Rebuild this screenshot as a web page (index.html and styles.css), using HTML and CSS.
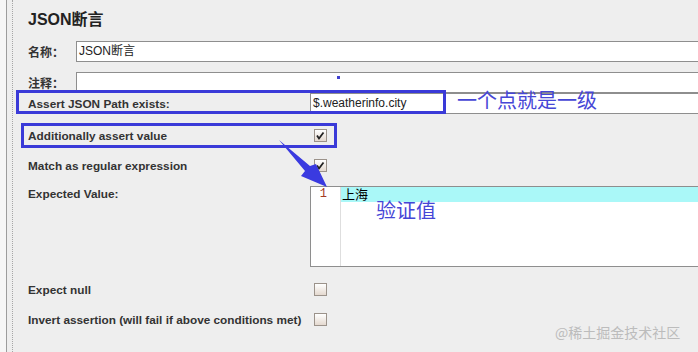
FILE: index.html
```html
<!DOCTYPE HTML>
<html>
    <head>
        <meta charset='utf-8'/>
        <link rel="stylesheet" href="styles.css">
    </head>
    <body>
        <div class="page">
            <div class="rail"></div>
            <div class="rail-dots"></div>
            <div class="main">
                <h1 class="title">JSON断言</h1>
                <div class="row short name">
                    <span class="lbl">名称：</span>
                    <div class="field">JSON断言</div>
                </div>
                <div class="row short comment">
                    <span class="lbl">注释：</span>
                    <div class="field"></div>
                </div>
                <div class="row wide path">
                    <span class="lbl">Assert JSON Path exists:</span>
                    <div class="field">$.weatherinfo.city</div>
                </div>
                <div class="row wide check c1">
                    <span class="lbl">Additionally assert value</span>
                    <span class="box"><svg width="11" height="11" viewBox="0 0 11 11"><path d="M2 5.5 L4 8.5 L8.5 2.5" fill="none" stroke="#222" stroke-width="1.8"/></svg></span>
                </div>
                <div class="row wide check c2">
                    <span class="lbl">Match as regular expression</span>
                    <span class="box"><svg width="11" height="11" viewBox="0 0 11 11"><path d="M2 5.5 L4 8.5 L8.5 2.5" fill="none" stroke="#222" stroke-width="1.8"/></svg></span>
                </div>
                <div class="row wide value">
                    <span class="lbl">Expected Value:</span>
                    <div class="editor">
                        <div class="gutter">1</div>
                        <div class="code">
                            <div class="line cur">上海</div>
                        </div>
                    </div>
                </div>
                <div class="row wide check c3">
                    <span class="lbl">Expect null</span>
                    <span class="box"></span>
                </div>
                <div class="row wide check c4">
                    <span class="lbl">Invert assertion (will fail if above conditions met)</span>
                    <span class="box"></span>
                </div>
            </div>

            <!-- annotations drawn over the screenshot -->
            <div class="mark mark1"></div>
            <div class="mark mark2"></div>
            <div class="dot"></div>
            <div class="note note1">一个点就是一级</div>
            <div class="note note2">验证值</div>
            <svg class="arrow" width="698" height="352" viewBox="0 0 698 352">
                <path d="M279 140 L310 166 L316 164 L327 187 L301 176 L305 171 Z" fill="#3a3ae0"/>
            </svg>
            <div class="watermark">@稀土掘金技术社区</div>
        </div>
    </body>
</html>
```

FILE: styles.css
```css
body{
    margin: 0;
    background: #eeeeee;
    font-family: "Liberation Sans", "Noto Sans CJK SC", sans-serif;
    font-size: 12px;
    color: #333;
    overflow: hidden;
}
.page{
    position: relative;
    display: flex;
    height: 352px;
}
.rail{
    width: 6px;
    background: #f6f6f6;
    border-right: 1px solid #9c9c9c;
}
.rail-dots{
    width: 5px;
    border-right: 1px dotted #a6a6a6;
}
.main{
    flex: 1;
    padding-left: 15px;
    display: flex;
    flex-direction: column;
}
.title{
    margin: 10px 0 0;
    height: 20px;
    line-height: 20px;
    font-size: 16px;
    font-weight: bold;
    color: #222;
}
.row{
    display: flex;
    align-items: center;
}
.lbl{
    font-weight: bold;
    white-space: nowrap;
}
.short .lbl{
    width: 48px;
}
.wide .lbl{
    width: 282px;
    font-size: 11.8px;
}
.field{
    flex: 1;
    height: 19px;
    line-height: 19px;
    padding-left: 2px;
    background: #fff;
    border: 1px solid #8e8e8e;
    border-right: none;
    color: #222;
}
.name{
    margin-top: 11px;
}
.comment{
    margin-top: 10px;
}
.check{
    height: 13px;
}
.c1{
    margin-top: 15px;
}
.c2{
    margin-top: 17px;
}
.c3{
    margin-top: 16px;
}
.c4{
    margin-top: 17px;
}
.box{
    width: 11px;
    height: 11px;
    margin-left: 4px;
    border: 1px solid #9b928a;
    background: linear-gradient(#ffffff, #e4d9cf);
    display: flex;
}
.value{
    margin-top: 14px;
    align-items: flex-start;
}
.value .lbl{
    line-height: 16px;
}
.editor{
    flex: 1;
    height: 79px;
    display: flex;
    background: #fff;
    border: 1px solid #8e8e8e;
    border-right: none;
}
.gutter{
    width: 16px;
    padding-right: 13px;
    text-align: right;
    border-right: 1px solid #dedede;
    font-family: "Liberation Mono", monospace;
    font-size: 12px;
    line-height: 15px;
    color: #a33a22;
}
.code{
    flex: 1;
}
.line{
    height: 15px;
    line-height: 15px;
    padding-left: 1px;
    font-size: 13px;
    color: #000;
}
.cur{
    background: #aaf8f8;
}
.mark{
    position: absolute;
    border: 3px solid #3a3ad8;
}
.mark1{
    left: 16px;
    top: 90px;
    width: 424px;
    height: 18px;
}
.mark2{
    left: 21px;
    top: 123px;
    width: 310px;
    height: 19px;
}
.dot{
    position: absolute;
    left: 337px;
    top: 76px;
    width: 3px;
    height: 3px;
    background: #4040d0;
}
.note{
    position: absolute;
    font-family: "Noto Sans CJK SC", sans-serif;
    font-size: 20px;
    line-height: 20px;
    color: #4646d6;
}
.note1{
    left: 457px;
    top: 90px;
}
.note2{
    left: 376px;
    top: 200px;
}
.arrow{
    position: absolute;
    left: 0;
    top: 0;
}
.watermark{
    position: absolute;
    left: 555px;
    top: 324px;
    font-family: "Noto Sans CJK SC", sans-serif;
    font-size: 14px;
    line-height: 16px;
    color: #bcbcbc;
}
```
